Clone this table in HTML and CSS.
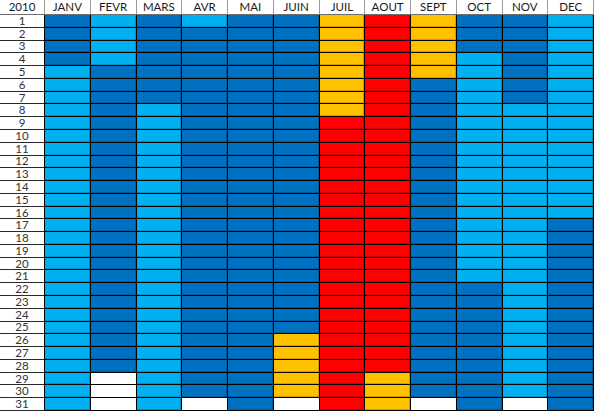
FILE: index.html
```html
<!DOCTYPE html>
<html>
<head>
<meta charset="utf-8">
<title>Calendrier 2010</title>
<link rel="stylesheet" href="styles.css">
</head>
<body>
  <div class="calendar">
    <div class="head">2010</div><div class="head">JANV</div><div class="head">FEVR</div><div class="head">MARS</div><div class="head">AVR</div><div class="head">MAI</div><div class="head">JUIN</div><div class="head">JUIL</div><div class="head">AOUT</div><div class="head">SEPT</div><div class="head">OCT</div><div class="head">NOV</div><div class="head">DEC</div>

    <div class="day">1</div><div class="d"></div><div class="l"></div><div class="d"></div><div class="l"></div><div class="d"></div><div class="d"></div><div class="y"></div><div class="r"></div><div class="y"></div><div class="d"></div><div class="d"></div><div class="l"></div>
    <div class="day">2</div><div class="d"></div><div class="l"></div><div class="d"></div><div class="d"></div><div class="d"></div><div class="d"></div><div class="y"></div><div class="r"></div><div class="y"></div><div class="d"></div><div class="d"></div><div class="l"></div>
    <div class="day">3</div><div class="d"></div><div class="l"></div><div class="d"></div><div class="d"></div><div class="d"></div><div class="d"></div><div class="y"></div><div class="r"></div><div class="y"></div><div class="d"></div><div class="d"></div><div class="l"></div>
    <div class="day">4</div><div class="d"></div><div class="l"></div><div class="d"></div><div class="d"></div><div class="d"></div><div class="d"></div><div class="y"></div><div class="r"></div><div class="y"></div><div class="l"></div><div class="d"></div><div class="l"></div>
    <div class="day">5</div><div class="l"></div><div class="d"></div><div class="d"></div><div class="d"></div><div class="d"></div><div class="d"></div><div class="y"></div><div class="r"></div><div class="y"></div><div class="l"></div><div class="d"></div><div class="l"></div>
    <div class="day">6</div><div class="l"></div><div class="d"></div><div class="d"></div><div class="d"></div><div class="d"></div><div class="d"></div><div class="y"></div><div class="r"></div><div class="d"></div><div class="l"></div><div class="d"></div><div class="l"></div>
    <div class="day">7</div><div class="l"></div><div class="d"></div><div class="d"></div><div class="d"></div><div class="d"></div><div class="d"></div><div class="y"></div><div class="r"></div><div class="d"></div><div class="l"></div><div class="d"></div><div class="l"></div>
    <div class="day">8</div><div class="l"></div><div class="d"></div><div class="l"></div><div class="d"></div><div class="d"></div><div class="d"></div><div class="y"></div><div class="r"></div><div class="d"></div><div class="l"></div><div class="l"></div><div class="l"></div>
    <div class="day">9</div><div class="l"></div><div class="d"></div><div class="l"></div><div class="d"></div><div class="d"></div><div class="d"></div><div class="r"></div><div class="r"></div><div class="d"></div><div class="l"></div><div class="l"></div><div class="l"></div>
    <div class="day">10</div><div class="l"></div><div class="d"></div><div class="l"></div><div class="d"></div><div class="d"></div><div class="d"></div><div class="r"></div><div class="r"></div><div class="d"></div><div class="l"></div><div class="l"></div><div class="l"></div>
    <div class="day">11</div><div class="l"></div><div class="d"></div><div class="l"></div><div class="d"></div><div class="d"></div><div class="d"></div><div class="r"></div><div class="r"></div><div class="d"></div><div class="l"></div><div class="l"></div><div class="l"></div>
    <div class="day">12</div><div class="l"></div><div class="d"></div><div class="l"></div><div class="d"></div><div class="d"></div><div class="d"></div><div class="r"></div><div class="r"></div><div class="d"></div><div class="l"></div><div class="l"></div><div class="l"></div>
    <div class="day">13</div><div class="l"></div><div class="d"></div><div class="l"></div><div class="d"></div><div class="d"></div><div class="d"></div><div class="r"></div><div class="r"></div><div class="d"></div><div class="l"></div><div class="l"></div><div class="l"></div>
    <div class="day">14</div><div class="l"></div><div class="d"></div><div class="l"></div><div class="d"></div><div class="d"></div><div class="d"></div><div class="r"></div><div class="r"></div><div class="d"></div><div class="l"></div><div class="l"></div><div class="l"></div>
    <div class="day">15</div><div class="l"></div><div class="d"></div><div class="l"></div><div class="d"></div><div class="d"></div><div class="d"></div><div class="r"></div><div class="r"></div><div class="d"></div><div class="l"></div><div class="l"></div><div class="l"></div>
    <div class="day">16</div><div class="l"></div><div class="d"></div><div class="l"></div><div class="d"></div><div class="d"></div><div class="d"></div><div class="r"></div><div class="r"></div><div class="d"></div><div class="l"></div><div class="l"></div><div class="l"></div>
    <div class="day">17</div><div class="l"></div><div class="d"></div><div class="l"></div><div class="d"></div><div class="d"></div><div class="d"></div><div class="r"></div><div class="r"></div><div class="d"></div><div class="l"></div><div class="l"></div><div class="d"></div>
    <div class="day">18</div><div class="l"></div><div class="d"></div><div class="l"></div><div class="d"></div><div class="d"></div><div class="d"></div><div class="r"></div><div class="r"></div><div class="d"></div><div class="l"></div><div class="l"></div><div class="d"></div>
    <div class="day">19</div><div class="l"></div><div class="d"></div><div class="l"></div><div class="d"></div><div class="d"></div><div class="d"></div><div class="r"></div><div class="r"></div><div class="d"></div><div class="l"></div><div class="l"></div><div class="d"></div>
    <div class="day">20</div><div class="l"></div><div class="d"></div><div class="l"></div><div class="d"></div><div class="d"></div><div class="d"></div><div class="r"></div><div class="r"></div><div class="d"></div><div class="l"></div><div class="l"></div><div class="d"></div>
    <div class="day">21</div><div class="l"></div><div class="d"></div><div class="l"></div><div class="d"></div><div class="d"></div><div class="d"></div><div class="r"></div><div class="r"></div><div class="d"></div><div class="l"></div><div class="l"></div><div class="d"></div>
    <div class="day">22</div><div class="l"></div><div class="d"></div><div class="l"></div><div class="d"></div><div class="d"></div><div class="d"></div><div class="r"></div><div class="r"></div><div class="d"></div><div class="d"></div><div class="l"></div><div class="d"></div>
    <div class="day">23</div><div class="l"></div><div class="d"></div><div class="l"></div><div class="d"></div><div class="d"></div><div class="d"></div><div class="r"></div><div class="r"></div><div class="d"></div><div class="d"></div><div class="l"></div><div class="d"></div>
    <div class="day">24</div><div class="l"></div><div class="d"></div><div class="l"></div><div class="d"></div><div class="d"></div><div class="d"></div><div class="r"></div><div class="r"></div><div class="d"></div><div class="d"></div><div class="l"></div><div class="d"></div>
    <div class="day">25</div><div class="l"></div><div class="d"></div><div class="l"></div><div class="d"></div><div class="d"></div><div class="d"></div><div class="r"></div><div class="r"></div><div class="d"></div><div class="d"></div><div class="l"></div><div class="d"></div>
    <div class="day">26</div><div class="l"></div><div class="d"></div><div class="l"></div><div class="d"></div><div class="d"></div><div class="y"></div><div class="r"></div><div class="r"></div><div class="d"></div><div class="d"></div><div class="l"></div><div class="d"></div>
    <div class="day">27</div><div class="l"></div><div class="d"></div><div class="l"></div><div class="d"></div><div class="d"></div><div class="y"></div><div class="r"></div><div class="r"></div><div class="d"></div><div class="d"></div><div class="l"></div><div class="d"></div>
    <div class="day">28</div><div class="l"></div><div class="d"></div><div class="l"></div><div class="d"></div><div class="d"></div><div class="y"></div><div class="r"></div><div class="r"></div><div class="d"></div><div class="d"></div><div class="l"></div><div class="d"></div>
    <div class="day">29</div><div class="l"></div><div class="w"></div><div class="l"></div><div class="d"></div><div class="d"></div><div class="y"></div><div class="r"></div><div class="y"></div><div class="d"></div><div class="d"></div><div class="l"></div><div class="d"></div>
    <div class="day">30</div><div class="l"></div><div class="w"></div><div class="l"></div><div class="d"></div><div class="d"></div><div class="y"></div><div class="r"></div><div class="y"></div><div class="d"></div><div class="d"></div><div class="l"></div><div class="d"></div>
    <div class="day">31</div><div class="l"></div><div class="w"></div><div class="l"></div><div class="w"></div><div class="d"></div><div class="w"></div><div class="r"></div><div class="y"></div><div class="w"></div><div class="d"></div><div class="w"></div><div class="d"></div>
  </div>
</body>
</html>
```

FILE: styles.css
```css
body {
    margin: 0;
    background-color: #fff;
    font-family: Lato, "Liberation Sans", sans-serif;
}

.calendar {
    display: grid;
    grid-template-columns: 45px repeat(12, minmax(0, 1fr));
    grid-template-rows: 15px repeat(31, minmax(0, 1fr));
    width: 594px;
    height: 411px;
    overflow: hidden;
}

.calendar div {
    box-sizing: border-box;
    min-height: 0;
    border-right: 1px solid #000;
    border-bottom: 1px solid #000;
    box-shadow: inset -1px -1px 0 rgba(0, 0, 0, 0.18);
}

.calendar .head {
    border-color: #9a9a9a;
    border-bottom-color: #6e6e6e;
    box-shadow: none;
    background-color: #fff;
    color: #1a1a1a;
    font-size: 11.5px;
    line-height: 14px;
    text-align: center;
}

.calendar .day {
    border-bottom-color: #2a2a2a;
    box-shadow: none;
    background-color: #fff;
    color: #333;
    font-size: 11.5px;
    line-height: 12px;
    display: flex;
    align-items: center;
    justify-content: center;
}

.d { background-color: #0070c0; }
.l { background-color: #00b0f0; }
.y { background-color: #ffc000; }
.r { background-color: #ff0000; }
.calendar .w { background-color: #fff; box-shadow: none; }
```
